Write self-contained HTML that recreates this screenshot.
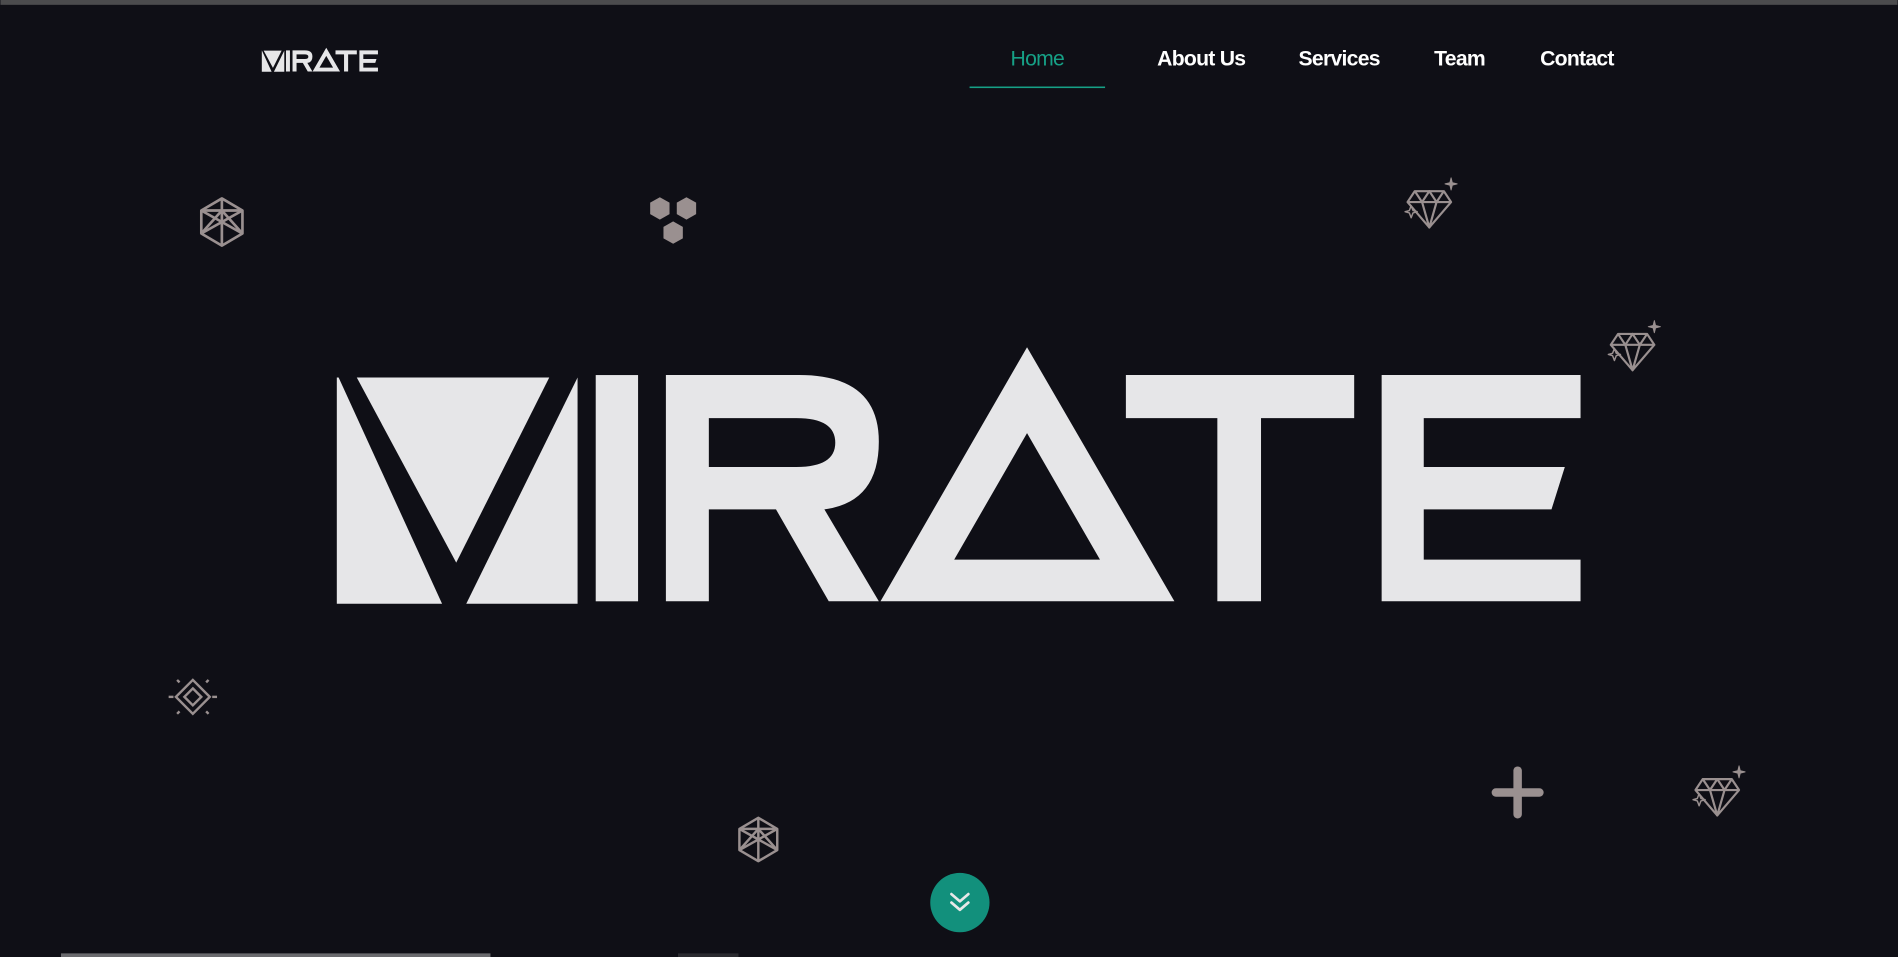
<!DOCTYPE html>
<html><head><meta charset="utf-8"><style>
html,body{margin:0;padding:0;background:#0f0f16;width:1898px;height:957px;overflow:hidden}
svg{display:block}
</style></head><body>
<svg width="1898" height="957" viewBox="0 0 1568 791" xmlns="http://www.w3.org/2000/svg">
<defs>
<g id="logo" fill="#e6e6e8" fill-rule="evenodd">
<polygon points="278,312 279.5,312 365,499 278,499"/>
<polygon points="294.5,312 453.6,312 376.7,465"/>
<polygon points="477,312 477,499 385,499"/>
<rect x="492" y="310" width="35" height="187"/>
<path d="M550,310 L660,310 Q726,310 726,365 Q726,415 681,421 L726,497 L684.6,497 L641,421 L585.5,421 L585.5,497 L550,497 Z M585.5,345.6 L658,345.6 Q690,345.6 690,366 Q690,386 658,386 L585.5,386 Z"/>
<path d="M848.5,287 L970.3,497 L727.4,497 Z M848.5,358 L788.3,462.6 L908.8,462.6 Z"/>
<path d="M930.2,310 L1118.9,310 L1118.9,345.6 L1041.9,345.6 L1041.9,497 L1005.8,497 L1005.8,345.6 L930.2,345.6 Z"/>
<path d="M1141.6,310 L1306,310 L1306,345.6 L1176.4,345.6 L1176.4,386 L1293,386 L1282,421 L1176.4,421 L1176.4,462.6 L1306,462.6 L1306,497 L1141.6,497 Z"/>
</g>
<g id="cube" fill="none" stroke="#9a9090" stroke-width="2.2" stroke-linejoin="round">
<polygon points="20,1 37,11 37,30 20,40 3,30 3,11"/>
<line x1="20" y1="1" x2="20" y2="40"/><line x1="3" y1="11" x2="37" y2="11"/>
<line x1="3" y1="11" x2="37" y2="30"/><line x1="37" y1="11" x2="3" y2="30"/>
<line x1="3" y1="30" x2="20" y2="11"/><line x1="37" y1="30" x2="20" y2="11"/>
</g>
<g id="dia" fill="none" stroke="#9a9090" stroke-width="1.8" stroke-linejoin="round">
<polygon points="8,8 32,8 38,17 20,38 2,17"/>
<line x1="2" y1="17" x2="38" y2="17"/>
<polyline points="8,8 14,17 20,8 26,17 32,8"/>
<polyline points="14,17 20,38 26,17"/>
<path d="M38,-3 L39,1 L43,2 L39,3 L38,7 L37,3 L33,2 L37,1 Z" fill="#9a9090" stroke-width="0.8"/>
<path d="M5,20 L6.5,24 L10,25 L6.5,26 L5,30 L3.5,26 L0,25 L3.5,24 Z" stroke-width="1.2"/>
</g>
<g id="sq" fill="none" stroke="#9a9090" stroke-width="2">
<polygon points="20,4 34,18 20,32 6,18"/>
<polygon points="20,11 27,18 20,25 13,18"/>
<line x1="0" y1="18" x2="4" y2="18"/><line x1="36" y1="18" x2="40" y2="18"/>
<line x1="7" y1="4" x2="9" y2="6"/><line x1="33" y1="4" x2="31" y2="6"/>
<line x1="7" y1="32" x2="9" y2="30"/><line x1="33" y1="32" x2="31" y2="30"/>
</g>
</defs>
<rect x="0" y="0" width="1568" height="4" fill="#4b4b4d"/>
<use href="#logo" transform="translate(216,39.5) scale(0.0934) translate(-278,-287)"/>
<g font-family="Liberation Sans, sans-serif" font-size="17.5" font-weight="bold" fill="#ffffff" letter-spacing="-0.6">
<text x="857" y="54" text-anchor="middle" fill="#16a086" font-weight="normal">Home</text>
<text x="992.5" y="54" text-anchor="middle">About Us</text>
<text x="1106.5" y="54" text-anchor="middle">Services</text>
<text x="1206" y="54" text-anchor="middle">Team</text>
<text x="1303" y="54" text-anchor="middle">Contact</text>
</g>
<rect x="801" y="71.5" width="112" height="1.3" fill="#16a086"/>
<use href="#logo"/>
<use href="#cube" transform="translate(163,163)"/>
<use href="#cube" transform="translate(608,675) scale(0.92)"/>
<g fill="#9a9090">
<polygon points="545,163 553,167.5 553,177 545,181.5 537,177 537,167.5"/>
<polygon points="567,163 575,167.5 575,177 567,181.5 559,177 559,167.5"/>
<polygon points="556,183 564,187.5 564,197 556,201.5 548,197 548,187.5"/>
</g>
<use href="#dia" transform="translate(1161,150)"/>
<use href="#dia" transform="translate(1329,268)"/>
<use href="#dia" transform="translate(1399,636)"/>
<use href="#sq" transform="translate(139,558)"/>
<g stroke="#9a9090" stroke-width="7" stroke-linecap="round">
<line x1="1254" y1="637" x2="1254" y2="673"/><line x1="1236" y1="655" x2="1272" y2="655"/>
</g>
<circle cx="793" cy="746" r="24.5" fill="#12907c"/>
<g fill="none" stroke="#e8e8e8" stroke-width="2.2" stroke-linecap="round" stroke-linejoin="round">
<polyline points="786,739 793,745 800,739"/><polyline points="786,746 793,752 800,746"/>
</g>
<rect x="50" y="788" width="355" height="3" fill="#6a6a6e"/>
<rect x="560" y="788" width="50" height="3" fill="#2a2a2f"/>
</svg>
</body></html>
